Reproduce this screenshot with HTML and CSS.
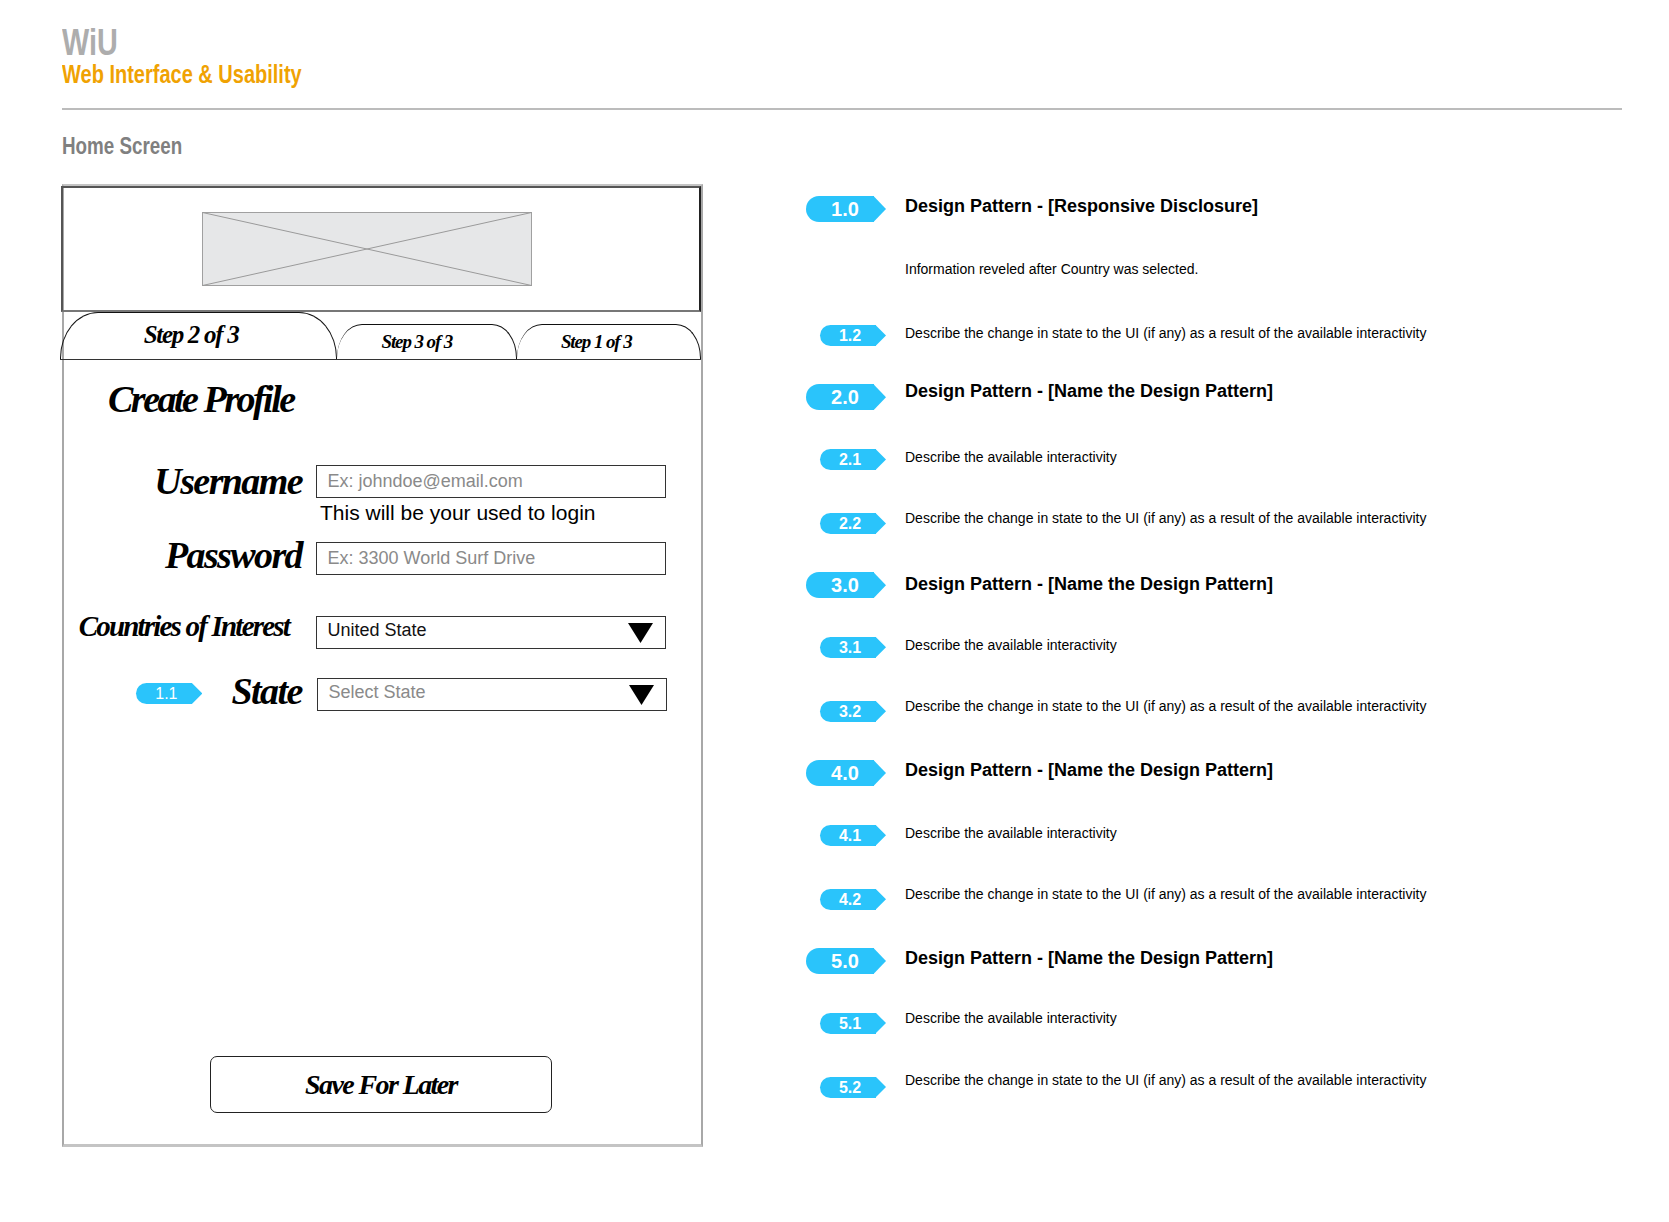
FILE: index.html
```html
<!DOCTYPE html>
<html lang="en">
<head>
    <meta charset="UTF-8">
    <title>WiU - Home Screen</title>
    <link rel="stylesheet" href="styles.css">
</head>
<body>
    <header class="site-header">
        <div class="logo">WiU</div>
        <div class="tagline">Web Interface &amp; Usability</div>
    </header>
    <h1 class="screen-name">Home Screen</h1>

    <div class="main">
        <!-- Wireframe on the left -->
        <div class="frame">
            <div class="banner">
                <svg class="placeholder" width="330" height="74" viewBox="0 0 330 74">
                    <rect x="0.5" y="0.5" width="329" height="73" fill="#e6e7e8" stroke="#a0a0a0"/>
                    <path d="M0.5 0.5L329.5 73.5M329.5 0.5L0.5 73.5" stroke="#9a9a9a" fill="none"/>
                </svg>
            </div>
            <div class="tabs">
                <div class="tab tab-active">Step 2 of 3</div>
                <div class="tab tab-mid">Step 3 of 3</div>
                <div class="tab tab-last">Step 1 of 3</div>
            </div>
            <h2 class="form-title">Create Profile</h2>
            <div class="form">
                <label class="label">Username</label>
                <input class="field" type="text" placeholder="Ex: johndoe@email.com">
                <div class="help">This will be your used to login</div>
                <label class="label password-label">Password</label>
                <input class="field" type="text" placeholder="Ex: 3300 World Surf Drive">
                <label class="label label-small countries-label">Countries of Interest</label>
                <div class="field select countries-field">United State<span class="arrow"></span></div>
                <div class="label state-label">
                    <span class="badge badge-small badge-inline">1.1</span>
                    <span>State</span>
                </div>
                <div class="field select state-field">Select State<span class="arrow"></span></div>
            </div>
            <button class="save-btn">Save For Later</button>
        </div>

        <!-- Annotations on the right -->
        <div class="notes">
            <div class="note note-title note-first"><span class="badge badge-large">1.0</span><h3>Design Pattern - [Responsive Disclosure]</h3></div>
            <div class="note note-info"><p>Information reveled after Country was selected.</p></div>
            <div class="note note-last text-low"><span class="badge badge-small">1.2</span><p>Describe the change in state to the UI (if any) as a result of the available interactivity</p></div>

            <div class="note note-title text-high"><span class="badge badge-large">2.0</span><h3>Design Pattern - [Name the Design Pattern]</h3></div>
            <div class="note note-mid"><span class="badge badge-small">2.1</span><p>Describe the available interactivity</p></div>
            <div class="note note-last"><span class="badge badge-small">2.2</span><p>Describe the change in state to the UI (if any) as a result of the available interactivity</p></div>

            <div class="note note-title text-low"><span class="badge badge-large">3.0</span><h3>Design Pattern - [Name the Design Pattern]</h3></div>
            <div class="note note-mid"><span class="badge badge-small">3.1</span><p>Describe the available interactivity</p></div>
            <div class="note note-last"><span class="badge badge-small">3.2</span><p>Describe the change in state to the UI (if any) as a result of the available interactivity</p></div>

            <div class="note note-title"><span class="badge badge-large">4.0</span><h3>Design Pattern - [Name the Design Pattern]</h3></div>
            <div class="note note-mid"><span class="badge badge-small">4.1</span><p>Describe the available interactivity</p></div>
            <div class="note note-last"><span class="badge badge-small">4.2</span><p>Describe the change in state to the UI (if any) as a result of the available interactivity</p></div>

            <div class="note note-title"><span class="badge badge-large">5.0</span><h3>Design Pattern - [Name the Design Pattern]</h3></div>
            <div class="note note-mid text-high"><span class="badge badge-small">5.1</span><p>Describe the available interactivity</p></div>
            <div class="note note-last text-high"><span class="badge badge-small">5.2</span><p>Describe the change in state to the UI (if any) as a result of the available interactivity</p></div>
        </div>
    </div>
</body>
</html>
```

FILE: styles.css
```css
/* General Reset */
* {
    margin: 0;
    padding: 0;
    box-sizing: border-box;
}

body {
    font-family: "Liberation Sans", Arial, sans-serif;
    background: #fff;
    color: #000;
    width: 1669px;
    height: 1222px;
    overflow: hidden;
    padding: 25px 47px 0 62px;
}

/* Page header */
.site-header {
    height: 85px;
    border-bottom: 2px solid #bcbcbc;
}

/* No condensed face is installed, so the heading font is squeezed */
.logo,
.tagline,
.screen-name {
    font-weight: bold;
    transform: scaleX(0.8);
    transform-origin: 0 0;
}

.logo {
    font-size: 36px;
    line-height: 36px;
    color: #adadad;
}

.tagline {
    font-size: 25px;
    line-height: 28px;
    margin-top: -1px;
    color: #f0a202;
}

.screen-name {
    font-size: 23.5px;
    line-height: 28px;
    color: #808080;
    margin-top: 22px;
}

.main {
    display: flex;
    margin-top: 24px;
}

/* Wireframe */
.frame {
    width: 641px;
    height: 963px;
    border: 2px solid #a8a8a8;
    border-top-color: #c4c4c4;
    border-bottom: 3px solid #c4c4c4;
    display: flex;
    flex-direction: column;
}

.banner {
    height: 126px;
    margin: 0 0 0 -3.5px;
    border: 2px solid #555;
    border-right-color: #222;
    border-bottom-color: #777;
    display: flex;
    align-items: center;
    padding-left: 139.5px;
}

.placeholder {
    display: block;
}

.tabs {
    display: flex;
    align-items: flex-end;
    height: 48px;
    margin-left: -4px;
    border-bottom: 1.5px solid #333;
}

.tab {
    font-family: "Liberation Serif", serif;
    font-weight: bold;
    font-style: italic;
    text-align: center;
    border: 1.5px solid #111;
    border-bottom: none;
}

.tab-active {
    width: 278px;
    height: 47px;
    border-radius: 38px 38px 0 0 / 46px 46px 0 0;
    font-size: 25px;
    line-height: 44px;
    letter-spacing: -1.3px;
    padding-right: 15px;
}

.tab-mid,
.tab-last {
    height: 35px;
    border-radius: 25px 25px 0 0 / 34px 34px 0 0;
    font-size: 19px;
    line-height: 33px;
    letter-spacing: -1.1px;
    border-left: none;
}

.tab-mid {
    width: 180px;
    padding-right: 19px;
}

.tab-last {
    width: 185px;
    padding-right: 24px;
}

.form-title {
    font-family: "Liberation Serif", serif;
    font-style: italic;
    font-weight: bold;
    font-size: 38px;
    line-height: 44px;
    letter-spacing: -2.5px;
    margin: 17px 0 0 44px;
}

.form {
    display: grid;
    grid-template-columns: 238px 350px;
    column-gap: 14px;
    margin-top: 44px;
    align-items: start;
}

.label {
    font-family: "Liberation Serif", serif;
    font-style: italic;
    font-weight: bold;
    font-size: 38px;
    line-height: 32px;
    letter-spacing: -1.6px;
    text-align: right;
}

.label-small {
    font-size: 29px;
    letter-spacing: -1.8px;
    white-space: nowrap;
    padding-right: 13px;
}

.field {
    height: 33px;
    width: 350px;
    border: 1.5px solid #333;
    border-radius: 0;
    background: #fff;
    padding: 0 10.5px;
    font-family: "Liberation Sans", sans-serif;
    font-size: 18px;
    line-height: 27px;
    color: #111;
    outline: none;
}

.field::placeholder {
    color: #8a8a8a;
    opacity: 1;
}

.help {
    grid-column: 2;
    font-size: 21px;
    line-height: 30px;
    padding-left: 4px;
    margin-bottom: 14px;
}

.password-label {
    margin-top: -3px;
}

.countries-label {
    grid-column: 1;
    margin-top: 34.5px;
}

.countries-field {
    margin-top: 41px;
}

.state-label {
    display: flex;
    justify-content: flex-end;
    align-items: center;
    margin-top: 25.5px;
    letter-spacing: -1.5px;
}

.state-field {
    margin: 29px 0 0 1px;
    color: #8a8a8a;
}

.select {
    position: relative;
}

.arrow {
    position: absolute;
    right: 12px;
    top: 6px;
    width: 25px;
    height: 20px;
    background: #000;
    clip-path: polygon(0 0, 100% 0, 50% 100%);
}

.save-btn {
    display: block;
    width: 342px;
    height: 57px;
    margin: auto 0 31px 146px;
    background: #fff;
    border: 1.5px solid #222;
    border-radius: 7px;
    font-family: "Liberation Serif", serif;
    font-style: italic;
    font-weight: bold;
    font-size: 28px;
    letter-spacing: -1.6px;
    color: #000;
}

/* Annotation list */
.notes {
    margin-left: 103px;
    width: 720px;
    padding-top: 12px;
}

.note {
    display: flex;
    align-items: flex-start;
}

.note h3 {
    font-size: 18px;
    line-height: 24px;
    font-weight: bold;
    margin: -2px 0 0 19px;
}

.note p {
    font-size: 14px;
    line-height: 20px;
    margin: -2px 0 0 19px;
}

.note-title {
    height: 64.6px;
}

.note-first {
    height: 64.5px;
}

.note-info {
    height: 64.5px;
    padding-left: 80px;
}

.note-mid {
    height: 64px;
}

.note-last {
    height: 59.3px;
}

.note-last p {
    margin-top: -4.5px;
}

/* The text does not sit at the same height next to every badge */
.note.text-high h3,
.note.text-high p {
    margin-top: -5px;
}

.note.note-last.text-high p {
    margin-top: -7px;
}

.note.text-low h3 {
    margin-top: 0;
}

.note.text-low p {
    margin-top: -2px;
}

/* Arrow badges, rounded on the left and pointed on the right */
.badge {
    position: relative;
    display: block;
    flex: none;
    background: #2ac4fb;
    color: #fff;
    font-weight: bold;
    text-align: center;
}

.badge::after {
    content: "";
    position: absolute;
    top: 0;
    height: 100%;
    background: #2ac4fb;
    clip-path: polygon(0 0, 100% 50%, 0 100%);
}

.badge-large {
    width: 68px;
    height: 26px;
    margin-right: 12px;
    border-radius: 13px 0 0 13px;
    font-size: 20px;
    line-height: 27px;
    padding-left: 10px;
}

.badge-large::after {
    left: 67.5px;
    width: 12.5px;
}

.badge-small {
    width: 56px;
    height: 21px;
    margin: 0 10px 0 14px;
    border-radius: 10.5px 0 0 10.5px;
    font-size: 16px;
    line-height: 21px;
    padding-left: 4px;
}

.badge-small::after {
    left: 55.5px;
    width: 10.5px;
}

.badge-inline {
    margin: 6px 39px 0 0;
    font-weight: normal;
    font-family: "Liberation Sans", sans-serif;
    font-style: normal;
    letter-spacing: 0;
}
```
